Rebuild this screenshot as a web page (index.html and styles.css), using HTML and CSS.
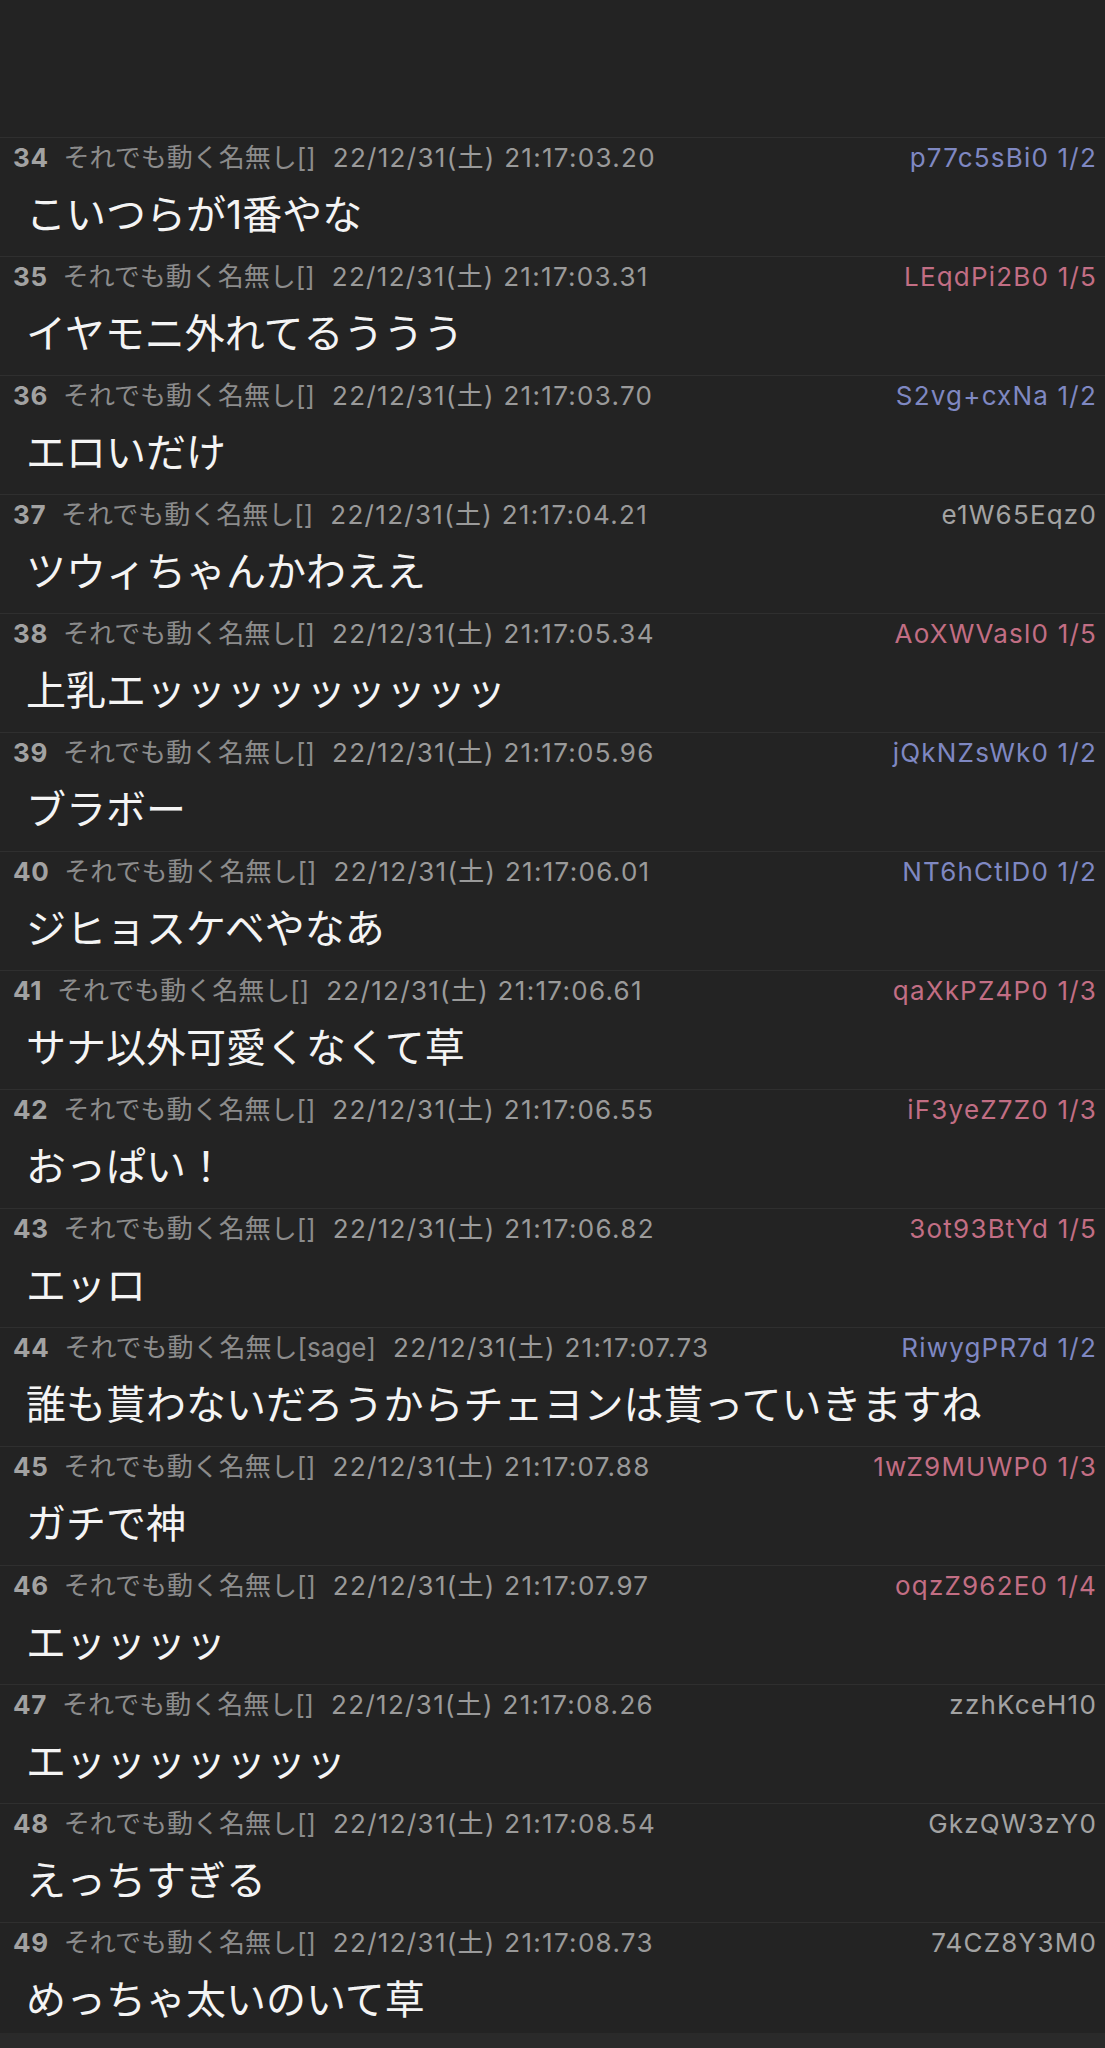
FILE: index.html
```html
<!DOCTYPE html>
<html lang="ja">
<head>
<meta charset="utf-8">
<title>スレッド</title>
<link rel="stylesheet" href="styles.css">
</head>
<body>
<div class="topbar"></div>
<main class="thread">
  <article class="post">
    <div class="meta"><span class="num">34</span><span class="name">それでも動く名無し[]</span><span class="date">22/12/31(土) 21:17:03.20</span><span class="id blue">p77c5sBi0 1/2</span></div>
    <p class="body">こいつらが1番やな</p>
  </article>
  <article class="post">
    <div class="meta"><span class="num">35</span><span class="name">それでも動く名無し[]</span><span class="date">22/12/31(土) 21:17:03.31</span><span class="id pink">LEqdPi2B0 1/5</span></div>
    <p class="body">イヤモニ外れてるううう</p>
  </article>
  <article class="post">
    <div class="meta"><span class="num">36</span><span class="name">それでも動く名無し[]</span><span class="date">22/12/31(土) 21:17:03.70</span><span class="id blue">S2vg+cxNa 1/2</span></div>
    <p class="body">エロいだけ</p>
  </article>
  <article class="post">
    <div class="meta"><span class="num">37</span><span class="name">それでも動く名無し[]</span><span class="date">22/12/31(土) 21:17:04.21</span><span class="id gray">e1W65Eqz0</span></div>
    <p class="body">ツウィちゃんかわええ</p>
  </article>
  <article class="post">
    <div class="meta"><span class="num">38</span><span class="name">それでも動く名無し[]</span><span class="date">22/12/31(土) 21:17:05.34</span><span class="id pink">AoXWVasl0 1/5</span></div>
    <p class="body">上乳エッッッッッッッッッ</p>
  </article>
  <article class="post">
    <div class="meta"><span class="num">39</span><span class="name">それでも動く名無し[]</span><span class="date">22/12/31(土) 21:17:05.96</span><span class="id blue">jQkNZsWk0 1/2</span></div>
    <p class="body">ブラボー</p>
  </article>
  <article class="post">
    <div class="meta"><span class="num">40</span><span class="name">それでも動く名無し[]</span><span class="date">22/12/31(土) 21:17:06.01</span><span class="id blue">NT6hCtlD0 1/2</span></div>
    <p class="body">ジヒョスケベやなあ</p>
  </article>
  <article class="post">
    <div class="meta"><span class="num">41</span><span class="name">それでも動く名無し[]</span><span class="date">22/12/31(土) 21:17:06.61</span><span class="id pink">qaXkPZ4P0 1/3</span></div>
    <p class="body">サナ以外可愛くなくて草</p>
  </article>
  <article class="post">
    <div class="meta"><span class="num">42</span><span class="name">それでも動く名無し[]</span><span class="date">22/12/31(土) 21:17:06.55</span><span class="id pink">iF3yeZ7Z0 1/3</span></div>
    <p class="body">おっぱい！</p>
  </article>
  <article class="post">
    <div class="meta"><span class="num">43</span><span class="name">それでも動く名無し[]</span><span class="date">22/12/31(土) 21:17:06.82</span><span class="id pink">3ot93BtYd 1/5</span></div>
    <p class="body">エッロ</p>
  </article>
  <article class="post">
    <div class="meta"><span class="num">44</span><span class="name">それでも動く名無し[sage]</span><span class="date">22/12/31(土) 21:17:07.73</span><span class="id blue">RiwygPR7d 1/2</span></div>
    <p class="body">誰も貰わないだろうからチェヨンは貰っていきますね</p>
  </article>
  <article class="post">
    <div class="meta"><span class="num">45</span><span class="name">それでも動く名無し[]</span><span class="date">22/12/31(土) 21:17:07.88</span><span class="id pink">1wZ9MUWP0 1/3</span></div>
    <p class="body">ガチで神</p>
  </article>
  <article class="post">
    <div class="meta"><span class="num">46</span><span class="name">それでも動く名無し[]</span><span class="date">22/12/31(土) 21:17:07.97</span><span class="id pink">oqzZ962E0 1/4</span></div>
    <p class="body">エッッッッ</p>
  </article>
  <article class="post">
    <div class="meta"><span class="num">47</span><span class="name">それでも動く名無し[]</span><span class="date">22/12/31(土) 21:17:08.26</span><span class="id gray">zzhKceH10</span></div>
    <p class="body">エッッッッッッッ</p>
  </article>
  <article class="post">
    <div class="meta"><span class="num">48</span><span class="name">それでも動く名無し[]</span><span class="date">22/12/31(土) 21:17:08.54</span><span class="id gray">GkzQW3zY0</span></div>
    <p class="body">えっちすぎる</p>
  </article>
  <article class="post">
    <div class="meta"><span class="num">49</span><span class="name">それでも動く名無し[]</span><span class="date">22/12/31(土) 21:17:08.73</span><span class="id gray">74CZ8Y3M0</span></div>
    <p class="body">めっちゃ太いのいて草</p>
  </article>
</main>
<div class="bottombar"></div>
</body>
</html>
```
FILE: styles.css
```css
html, body {
  margin: 0;
  padding: 0;
  background: #232323;
}

body {
  font-family: "Inter", "Noto Sans CJK JP", sans-serif;
  color: #f2f2f2;
}

.topbar {
  height: 137px;
  background: #232323;
}

.thread {
  display: flex;
  flex-direction: column;
}

.post {
  border-top: 1px solid #2f2f2f;
  padding: 4px 9px 13px 13px;
  height: 101px;
}

.meta {
  display: flex;
  align-items: baseline;
  font-size: 26px;
  line-height: 32px;
  white-space: nowrap;
  color: #8f8f8f;
}

.num {
  font-weight: 700;
  color: #a2a2a2;
  letter-spacing: 0.6px;
  margin-right: 15px;
}

.name {
  color: #8c8c8c;
  margin-right: 17px;
}

.date {
  color: #9a9a9a;
  letter-spacing: 1.3px;
}

.id {
  margin-left: auto;
  letter-spacing: 1.2px;
  margin-right: -1px;
}

.blue {
  color: #7f88c2;
}

.pink {
  color: #c26e84;
}

.gray {
  color: #a3a3a3;
}

.body {
  margin: 13px 0 0 0;
  padding-left: 13px;
  font-size: 40px;
  line-height: 56px;
  color: #f4f4f4;
  white-space: nowrap;
}

.bottombar {
  position: fixed;
  left: 0;
  right: 0;
  bottom: 0;
  height: 15px;
  background: #2a2a2a;
}
```
